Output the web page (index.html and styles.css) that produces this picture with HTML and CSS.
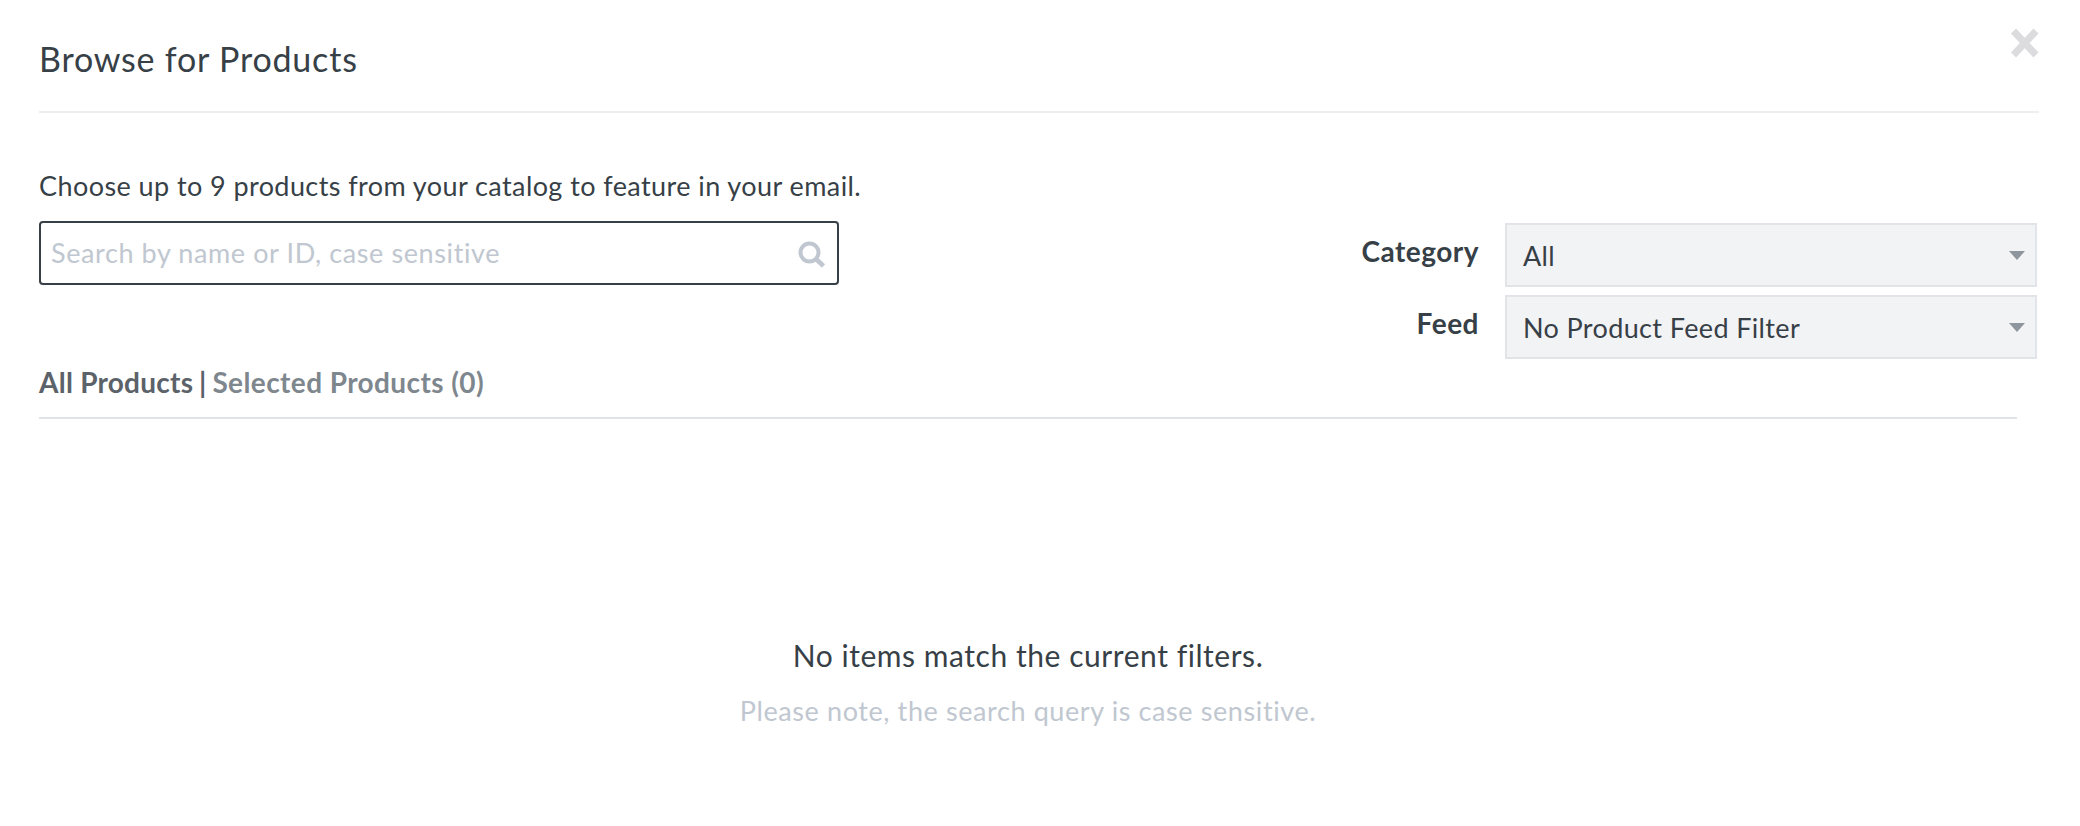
FILE: index.html
```html
<!DOCTYPE html>
<html lang="en">
<head>
<meta charset="utf-8">
<title>Browse for Products</title>
<link rel="stylesheet" href="styles.css">
</head>
<body>
<main class="modal">
  <header class="modal-header">
    <h1 class="modal-title">Browse for Products</h1>
    <button class="close" type="button" aria-label="Close">
      <svg width="30" height="30" viewBox="0 0 30 30"><path d="M4.5 3 27 27M27 3 4.5 27" stroke="#dcdcde" stroke-width="7" fill="none"/></svg>
    </button>
  </header>
  <p class="intro">Choose up to 9 products from your catalog to feature in your email.</p>
  <section class="filters">
    <div class="search">
      <span class="search-placeholder">Search by name or ID, case sensitive</span>
      <svg class="search-icon" width="28" height="27" viewBox="0 0 28 27"><circle cx="11.5" cy="11.5" r="9" stroke="#c0c7d0" stroke-width="4" fill="none"/><path d="M18 18 25.5 25" stroke="#c0c7d0" stroke-width="4.5" fill="none"/></svg>
    </div>
    <div class="selects">
      <span class="select-label">Category</span>
      <div class="select"><span>All</span><i class="caret"></i></div>
      <span class="select-label">Feed</span>
      <div class="select"><span>No Product Feed Filter</span><i class="caret"></i></div>
    </div>
  </section>
  <nav class="tabs"><span class="tab-active">All Products</span><span class="tab-sep"> | </span><span class="tab">Selected Products (0)</span></nav>
  <section class="empty">
    <p class="empty-title">No items match the current filters.</p>
    <p class="empty-note">Please note, the search query is case sensitive.</p>
  </section>
</main>
</body>
</html>
```
FILE: styles.css
```css
* { box-sizing: border-box; }
html, body { margin: 0; padding: 0; background: #fff; }
body { font-family: "Lato", "Liberation Sans", sans-serif; color: #373f47; overflow: hidden; }
.modal { width: 2080px; height: 826px; padding: 0 41px 0 39px; }
.modal-header { height: 113px; border-bottom: 2px solid #eceef0; display: flex; justify-content: space-between; align-items: flex-start; }
.modal-title { margin: 39px 0 0; font-size: 34px; line-height: 40px; font-weight: 400; letter-spacing: .8px; }
.close { border: 0; background: none; padding: 0; margin: 28px 0 0; width: 30px; height: 30px; display: block; }
.close svg { display: block; }
.intro { margin: 57px 0 0; font-size: 27px; line-height: 32px; letter-spacing: .42px; }
.filters { display: flex; justify-content: space-between; align-items: flex-start; margin-top: 19px; padding-right: 2px; }
.search { width: 800px; height: 64px; border: 2px solid #373f47; border-radius: 4px; display: flex; align-items: center; justify-content: space-between; padding: 0 11px 0 10px; }
.search-placeholder { font-size: 27px; letter-spacing: .6px; color: #c0c7d0; margin-top: -1px; }
.search-icon { display: block; margin-top: 2px; }
.selects { display: grid; grid-template-columns: auto 532px; column-gap: 26px; row-gap: 8px; margin-top: 2px; align-items: start; }
.select-label { font-size: 28px; line-height: 32px; font-weight: 700; text-align: right; margin-top: 12px; letter-spacing: .5px; }
.select { height: 64px; background: #f2f3f5; border: 2px solid #e1e4e8; display: flex; align-items: center; justify-content: space-between; padding: 0 10px 0 16px; font-size: 27px; letter-spacing: .37px; }
.caret { width: 0; height: 0; border-left: 8.5px solid transparent; border-right: 8.5px solid transparent; border-top: 9px solid #8f959c; margin-top: 0; }
.tabs { width: 1978px; margin-top: 7px; height: 53px; border-bottom: 2px solid #dfe2e6; font-size: 28px; line-height: 32px; font-weight: 700; letter-spacing: .4px; white-space: pre; }
.tab-active { color: #5c6269; letter-spacing: .25px; }
.tab-sep { color: #5c6269; font-weight: 700; word-spacing: -1.5px; }
.tab { color: #7f878e; }
.empty { width: 1978px; text-align: center; padding-top: 216px; }
.empty-title { margin: 0; font-size: 30px; line-height: 40px; letter-spacing: .55px; }
.empty-note { margin: 20px 0 0; font-size: 27px; line-height: 32px; letter-spacing: .6px; color: #c0c7d0; }
```
